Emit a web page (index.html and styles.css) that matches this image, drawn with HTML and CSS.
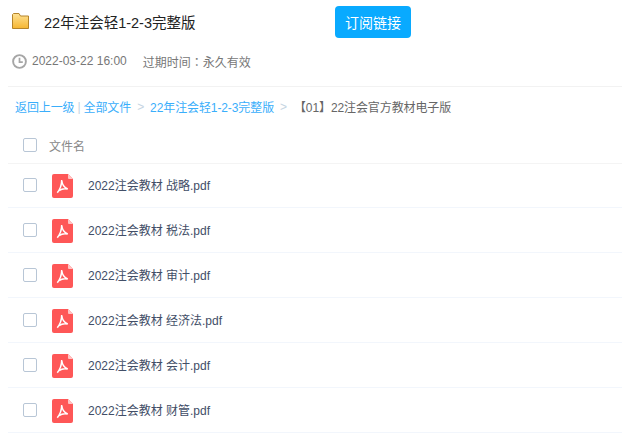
FILE: index.html
```html
<!DOCTYPE html>
<html lang="zh-CN">
  <head>
    <meta charset="UTF-8" />
    <title>22年注会轻1-2-3完整版</title>
    <link rel="stylesheet" href="styles.css">
  </head>
  <body>
    <header class="top">
      <svg class="folder" width="17" height="16" viewBox="0 0 17 16">
        <defs>
          <linearGradient id="mappe" x1="0" y1="0" x2="0" y2="1">
            <stop offset="0" stop-color="#fee295"/>
            <stop offset="1" stop-color="#f6b631"/>
          </linearGradient>
        </defs>
        <path d="M.5 1.5V15.5H16.5V3H8.5L7 .5H1.5Z" fill="url(#mappe)" stroke="#b5842a"/>
      </svg>
      <h1>22年注会轻1-2-3完整版</h1>
      <button class="dingyue">订阅链接</button>
    </header>
    <div class="meta">
      <svg width="15" height="15" viewBox="0 0 15 15" fill="none" stroke="#a6a6a6">
        <circle cx="7.5" cy="7.5" r="6.4" stroke-width="1.9"/>
        <path d="M7.5 3.8V8.2H10.8" stroke-width="1.7"/>
      </svg>
      <span>2022-03-22 16:00</span>
      <span class="udlob">过期时间<b lang="zh-TW">：</b>永久有效</span>
    </div>
    <nav class="crumbs">
      <a href="#">返回上一级</a><i class="pipe">|</i><a href="#">全部文件</a><i>&gt;</i><a href="#">22年注会轻1-2-3完整版</a><i class="sidste">&gt;</i><span>【01】22注会官方教材电子版</span>
    </nav>
    <div class="hoved">
      <span class="tjek"></span>
      <span>文件名</span>
    </div>
    <ul class="filer">
      <li><span class="tjek"></span><svg class="pdf" width="21" height="24"><use href="#pdf-ikon"/></svg><span class="navn">2022注会教材 战略.pdf</span></li>
      <li><span class="tjek"></span><svg class="pdf" width="21" height="24"><use href="#pdf-ikon"/></svg><span class="navn">2022注会教材 税法.pdf</span></li>
      <li><span class="tjek"></span><svg class="pdf" width="21" height="24"><use href="#pdf-ikon"/></svg><span class="navn">2022注会教材 审计.pdf</span></li>
      <li><span class="tjek"></span><svg class="pdf" width="21" height="24"><use href="#pdf-ikon"/></svg><span class="navn">2022注会教材 经济法.pdf</span></li>
      <li><span class="tjek"></span><svg class="pdf" width="21" height="24"><use href="#pdf-ikon"/></svg><span class="navn">2022注会教材 会计.pdf</span></li>
      <li><span class="tjek"></span><svg class="pdf" width="21" height="24"><use href="#pdf-ikon"/></svg><span class="navn">2022注会教材 财管.pdf</span></li>
    </ul>
    <svg width="0" height="0" class="defs">
      <symbol id="pdf-ikon" viewBox="0 0 21 24">
        <path d="M2 0H16L21 5V22A2 2 0 0 1 19 24H2A2 2 0 0 1 0 22V2A2 2 0 0 1 2 0Z" fill="#fe5757"/>
        <path d="M16 0L21 5H17A1 1 0 0 1 16 4Z" fill="#ffc4c4"/>
        <path d="M9.7 6C9.7 10 8.7 14.5 5.3 18.7M9.7 6C10 10 12 13.6 15.8 15M15.8 15C13 14.3 9.5 14.8 7 16.6" fill="none" stroke="#fff" stroke-width="1.5"/>
      </symbol>
    </svg>
  </body>
</html>
```

FILE: styles.css
```css
* {
  box-sizing: border-box;
}
body {
  margin: 0;
  background-color: white;
  font-family: "Liberation Sans", "Noto Sans CJK SC", sans-serif;
  font-size: 12px;
  overflow: hidden;
}
.top {
  display: flex;
  align-items: center;
  height: 32px;
  margin-top: 6px;
  padding-left: 12px;
}
.folder {
  margin-top: -3px;
}
.top h1 {
  width: 291px;
  margin: 0 0 2px 15px;
  font-size: 14.5px;
  font-weight: 400;
  color: #222;
}
.dingyue {
  width: 76px;
  height: 32px;
  padding: 0;
  border: none;
  border-radius: 4px;
  background-color: #09aaff;
  color: white;
  font: inherit;
  font-size: 14px;
}
.meta {
  display: flex;
  align-items: center;
  gap: 5px;
  height: 49px;
  margin-left: 8px;
  padding: 0 0 2px 4px;
  border-bottom: 1px solid #f2f2f2;
  color: #777;
}
.meta .udlob {
  margin-left: 11px;
}
.meta b {
  font-family: "Noto Sans CJK TC", sans-serif;
  font-weight: 400;
}
.crumbs {
  display: flex;
  align-items: center;
  height: 40px;
  padding: 0 0 1px 15px;
  color: #666;
  letter-spacing: -0.1px;
}
.crumbs a {
  color: #3aaefb;
  text-decoration: none;
}
.crumbs i {
  margin: 0 6px;
  font-style: normal;
  color: #c5d4e2;
}
.crumbs .pipe {
  margin: 0 3px;
}
.crumbs .sidste {
  margin: 0 7px 0 6px;
}
.hoved {
  display: flex;
  align-items: center;
  gap: 12px;
  height: 37px;
  margin-left: 8px;
  padding-left: 15px;
  border-bottom: 1px solid #f4f4f4;
  color: #888;
}
.tjek {
  flex: none;
  width: 14px;
  height: 14px;
  border: 1px solid #b8c6d6;
  border-radius: 2px;
  background-color: white;
}
.filer {
  margin: 0 0 0 8px;
  padding: 0;
  list-style: none;
}
.filer li {
  display: flex;
  align-items: center;
  height: 45px;
  padding-left: 15px;
  border-bottom: 1px solid #f2f6fc;
  color: #424e67;
}
.filer li:first-child {
  height: 44px;
  padding-bottom: 1px;
}
.navn {
  margin-bottom: 2px;
}
.pdf {
  flex: none;
  margin: 2px 15px 0 15px;
}
.defs {
  position: absolute;
}
```
